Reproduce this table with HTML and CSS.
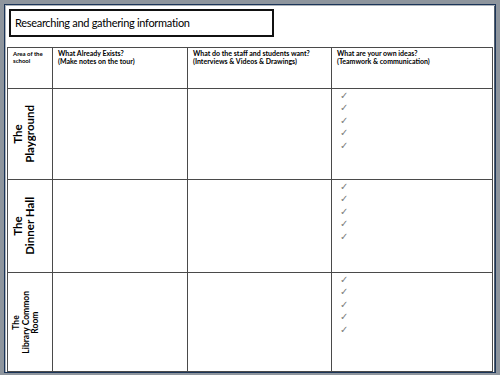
FILE: index.html
```html
<!DOCTYPE html>
<html>
<head>
<meta charset="utf-8">
<link rel="stylesheet" href="styles.css">
</head>
<body>
<div class="frame">
  <div class="sheet">
    <div class="title">Researching and gathering information</div>
    <div class="grid">
      <div class="cell head area">Area of the<br>school</div>
      <div class="cell head">What Already Exists?<br>(Make notes on the tour)</div>
      <div class="cell head">What do the staff and students want?<br>(Interviews &amp; Videos &amp; Drawings)</div>
      <div class="cell head last">What are your own ideas?<br>(Teamwork &amp; communication)</div>

      <div class="cell label"><span class="rot big">The<br>Playground</span></div>
      <div class="cell"></div>
      <div class="cell"></div>
      <div class="cell last checks"><span>✓</span><span>✓</span><span>✓</span><span>✓</span><span>✓</span></div>

      <div class="cell label"><span class="rot big">The<br>Dinner Hall</span></div>
      <div class="cell"></div>
      <div class="cell"></div>
      <div class="cell last checks"><span>✓</span><span>✓</span><span>✓</span><span>✓</span><span>✓</span></div>

      <div class="cell label"><span class="rot small">The<br>Library Common<br>Room</span></div>
      <div class="cell"></div>
      <div class="cell"></div>
      <div class="cell last checks"><span>✓</span><span>✓</span><span>✓</span><span>✓</span><span>✓</span></div>
    </div>
  </div>
</div>
</body>
</html>
```
FILE: styles.css
```css
html, body {
  margin: 0;
  padding: 0;
}
body {
  width: 500px;
  height: 375px;
  overflow: hidden;
  background: #8e959d;
  font-family: Lato, "Open Sans", sans-serif;
  color: #000;
}
.frame {
  box-sizing: border-box;
  width: 500px;
  height: 375px;
  padding: 4px 4px 2px 4px;
}
.sheet {
  box-sizing: border-box;
  height: 100%;
  background: #fff;
  border: 1px solid #1c3559;
  box-shadow: inset 1px 1px 0 #aeb4ba, inset -1px 0 0 #55606c;
  padding: 4px 2px 0 2px;
  display: flex;
  flex-direction: column;
}
.title {
  box-sizing: border-box;
  margin-left: 2px;
  width: 265px;
  height: 28px;
  border: 2px solid #111;
  font-size: 11px;
  line-height: 24px;
  padding-left: 4px;
  letter-spacing: -0.3px;
}
.grid {
  margin-top: 10px;
  flex: 1;
  display: grid;
  grid-template-columns: 45px 135px 144px 1fr;
  grid-template-rows: 41px 91px 93px 1fr;
  border-top: 1px solid #4a4a4a;
  border-left: 1px solid #4a4a4a;
}
.cell {
  border-right: 1px solid #4a4a4a;
  border-bottom: 1px solid #4a4a4a;
}
.head {
  font-size: 7px;
  font-weight: 700;
  line-height: 8px;
  padding: 1px 0 0 5px;
}
.head.area {
  font-size: 6px;
  line-height: 7px;
  padding: 2px 0 0 5px;
}
.label {
  display: flex;
  align-items: center;
  padding-left: 4px;
}
.rot {
  writing-mode: vertical-rl;
  transform: rotate(180deg);
  text-align: center;
  font-weight: 700;
}
.rot.big {
  font-size: 11.5px;
  line-height: 12px;
}
.rot.small {
  font-size: 8.5px;
  line-height: 9.5px;
}
.checks {
  display: flex;
  flex-direction: column;
  padding: 1px 0 0 8px;
}
.checks span {
  font-family: "DejaVu Sans", sans-serif;
  font-size: 10px;
  line-height: 12.4px;
  color: #7c7c7c;
}
```
